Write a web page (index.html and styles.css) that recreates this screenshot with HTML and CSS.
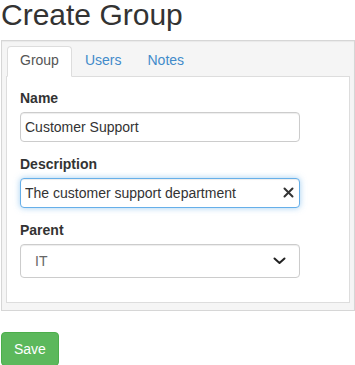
FILE: index.html
```html
<!DOCTYPE html>
<html lang="en">
<head>
    <meta charset="UTF-8">
    <meta name="viewport" content="width=device-width, initial-scale=1.0">
    <title>Create Group</title>
    <link rel="stylesheet" href="styles.css">
</head>
<body>

<h1 class="page-title">Create Group</h1>

<div class="well">
    <!-- Tabs -->
    <ul class="tabs">
        <li class="tab active"><a href="#">Group</a></li>
        <li class="tab"><a href="#">Users</a></li>
        <li class="tab"><a href="#">Notes</a></li>
    </ul>

    <div class="tab-content">
        <div class="form-group">
            <label for="name">Name</label>
            <input type="text" id="name" class="form-control" value="Customer Support">
        </div>

        <div class="form-group">
            <label for="description">Description</label>
            <div class="input-wrap">
                <input type="text" id="description" class="form-control focused" value="The customer support department">
                <span class="clear-btn">
                    <svg width="11" height="11" viewBox="0 0 11 11">
                        <path d="M1.5 1.5 L9.5 9.5 M9.5 1.5 L1.5 9.5" stroke="#333" stroke-width="2" stroke-linecap="round"/>
                    </svg>
                </span>
            </div>
        </div>

        <div class="form-group">
            <label for="parent">Parent</label>
            <div class="input-wrap">
                <select id="parent" class="form-control select">
                    <option>IT</option>
                </select>
                <span class="chevron">
                    <svg width="13" height="8" viewBox="0 0 13 8">
                        <path d="M1.5 1.5 L6.5 6 L11.5 1.5" fill="none" stroke="#222" stroke-width="2" stroke-linecap="round" stroke-linejoin="round"/>
                    </svg>
                </span>
            </div>
        </div>
    </div>
</div>

<button class="btn-save">Save</button>

</body>
</html>
```

FILE: styles.css
```css
body {
    font-family: "Liberation Sans", Arial, sans-serif;
    font-size: 14px;
    line-height: 20px;
    color: #333;
    margin: 0;
    padding: 0 0 0 1px;
    background-color: #fff;
}

.page-title {
    font-size: 30px;
    font-weight: normal;
    line-height: 30px;
    margin: 0 0 10px 0;
    color: #333;
}

.well {
    background-color: #f5f5f5;
    border: 1px solid #d6d6d6;
    padding: 5px 4px 7px 4px;
    box-shadow: inset 0 1px 1px rgba(0, 0, 0, 0.05);
}

.tabs {
    list-style: none;
    margin: 0;
    padding: 0 0 0 1px;
    display: flex;
}

.tab {
    margin-right: 0;
    margin-bottom: -1px;
}

.tab a {
    display: block;
    padding: 3px 12px 6px 12px;
    border: 1px solid transparent;
    border-radius: 4px 4px 0 0;
    color: #428bca;
    text-decoration: none;
}

.tab.active a {
    background-color: #fff;
    border-color: #ddd;
    border-bottom-color: #fff;
    color: #555;
}

.tab-content {
    background-color: #fff;
    border: 1px solid #ddd;
    padding: 11px 13px 12px 13px;
}

.form-group {
    margin-bottom: 12px;
}

.form-group label {
    display: block;
    font-weight: bold;
    margin-bottom: 4px;
}

.input-wrap {
    position: relative;
    width: 280px;
}

.form-control {
    box-sizing: border-box;
    display: block;
    width: 280px;
    height: 30px;
    padding: 0 4px;
    font-family: inherit;
    font-size: 14px;
    color: #333;
    background-color: #fff;
    border: 1px solid #ccc;
    border-radius: 4px;
    box-shadow: inset 0 1px 1px rgba(0, 0, 0, 0.075);
    outline: none;
}

.form-control.focused {
    border-color: #66afe9;
    box-shadow: inset 0 1px 1px rgba(0, 0, 0, 0.075), 0 0 6px rgba(102, 175, 233, 0.6);
}

.select {
    height: 34px;
    padding: 0 14px;
    color: #666;
    -webkit-appearance: none;
    appearance: none;
}

.clear-btn {
    position: absolute;
    right: 6px;
    top: 9px;
    line-height: 0;
}

.chevron {
    position: absolute;
    right: 14px;
    top: 13px;
    line-height: 0;
}

.btn-save {
    margin-top: 21px;
    font-family: inherit;
    font-size: 14px;
    line-height: 20px;
    color: #fff;
    background-color: #5cb85c;
    border: 1px solid #4cae4c;
    border-radius: 4px;
    padding: 6px 12px;
    cursor: pointer;
}
```
